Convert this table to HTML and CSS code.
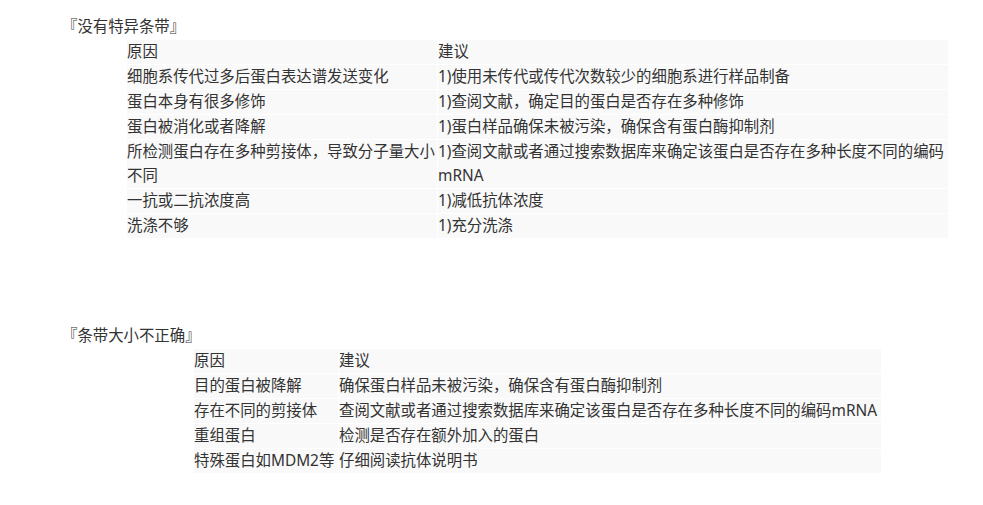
FILE: index.html
```html
<!DOCTYPE html>
<html lang="zh-CN">
<head>
<meta charset="utf-8">
<title>Western Blot 问题</title>
<link rel="stylesheet" href="styles.css">
</head>
<body>
<div class="page">
  <p class="title">『没有特异条带』</p>
  <table class="grid grid-one">
    <colgroup><col class="c1"><col class="c2"></colgroup>
    <tr><td>原因</td><td>建议</td></tr>
    <tr><td>细胞系传代过多后蛋白表达谱发送变化</td><td>1)使用未传代或传代次数较少的细胞系进行样品制备</td></tr>
    <tr><td>蛋白本身有很多修饰</td><td>1)查阅文献，确定目的蛋白是否存在多种修饰</td></tr>
    <tr><td>蛋白被消化或者降解</td><td>1)蛋白样品确保未被污染，确保含有蛋白酶抑制剂</td></tr>
    <tr><td>所检测蛋白存在多种剪接体，导致分子量大小不同</td><td>1)查阅文献或者通过搜索数据库来确定该蛋白是否存在多种长度不同的编码mRNA</td></tr>
    <tr><td>一抗或二抗浓度高</td><td>1)减低抗体浓度</td></tr>
    <tr><td>洗涤不够</td><td>1)充分洗涤</td></tr>
  </table>

  <p class="title title-second">『条带大小不正确』</p>
  <table class="grid grid-two">
    <colgroup><col class="c1"><col class="c2"></colgroup>
    <tr><td>原因</td><td>建议</td></tr>
    <tr><td>目的蛋白被降解</td><td>确保蛋白样品未被污染，确保含有蛋白酶抑制剂</td></tr>
    <tr><td>存在不同的剪接体</td><td>查阅文献或者通过搜索数据库来确定该蛋白是否存在多种长度不同的编码mRNA</td></tr>
    <tr><td>重组蛋白</td><td>检测是否存在额外加入的蛋白</td></tr>
    <tr><td>特殊蛋白如MDM2等</td><td>仔细阅读抗体说明书</td></tr>
  </table>
</div>
</body>
</html>
```

FILE: styles.css
```css
html, body {
  margin: 0;
  padding: 0;
  background: #ffffff;
}

body {
  font-family: "Noto Sans", "Noto Sans CJK SC", sans-serif;
  font-size: 15.4px;
  line-height: 24px;
  color: #333333;
}

.page {
  padding: 15px 0 0 62px;
}

.title {
  margin: 0;
  height: 24px;
  line-height: 24px;
  white-space: nowrap;
}

.title-second {
  margin-top: 85px;
}

.grid {
  border-collapse: separate;
  border-spacing: 1px;
  table-layout: fixed;
}

.grid td {
  padding: 0;
  background: #f9f9f9;
  vertical-align: top;
  text-align: left;
  line-height: 24px;
  height: 24px;
}

.grid-one {
  width: 823px;
  margin-left: 64px;
}

.grid-one .c1 { width: 310px; }
.grid-one .c2 { width: 510px; }

.grid-two {
  width: 689px;
  margin-left: 131px;
}

.grid-two .c1 { width: 144px; }
.grid-two .c2 { width: 542px; }

.grid-two td {
  white-space: nowrap;
}
```
